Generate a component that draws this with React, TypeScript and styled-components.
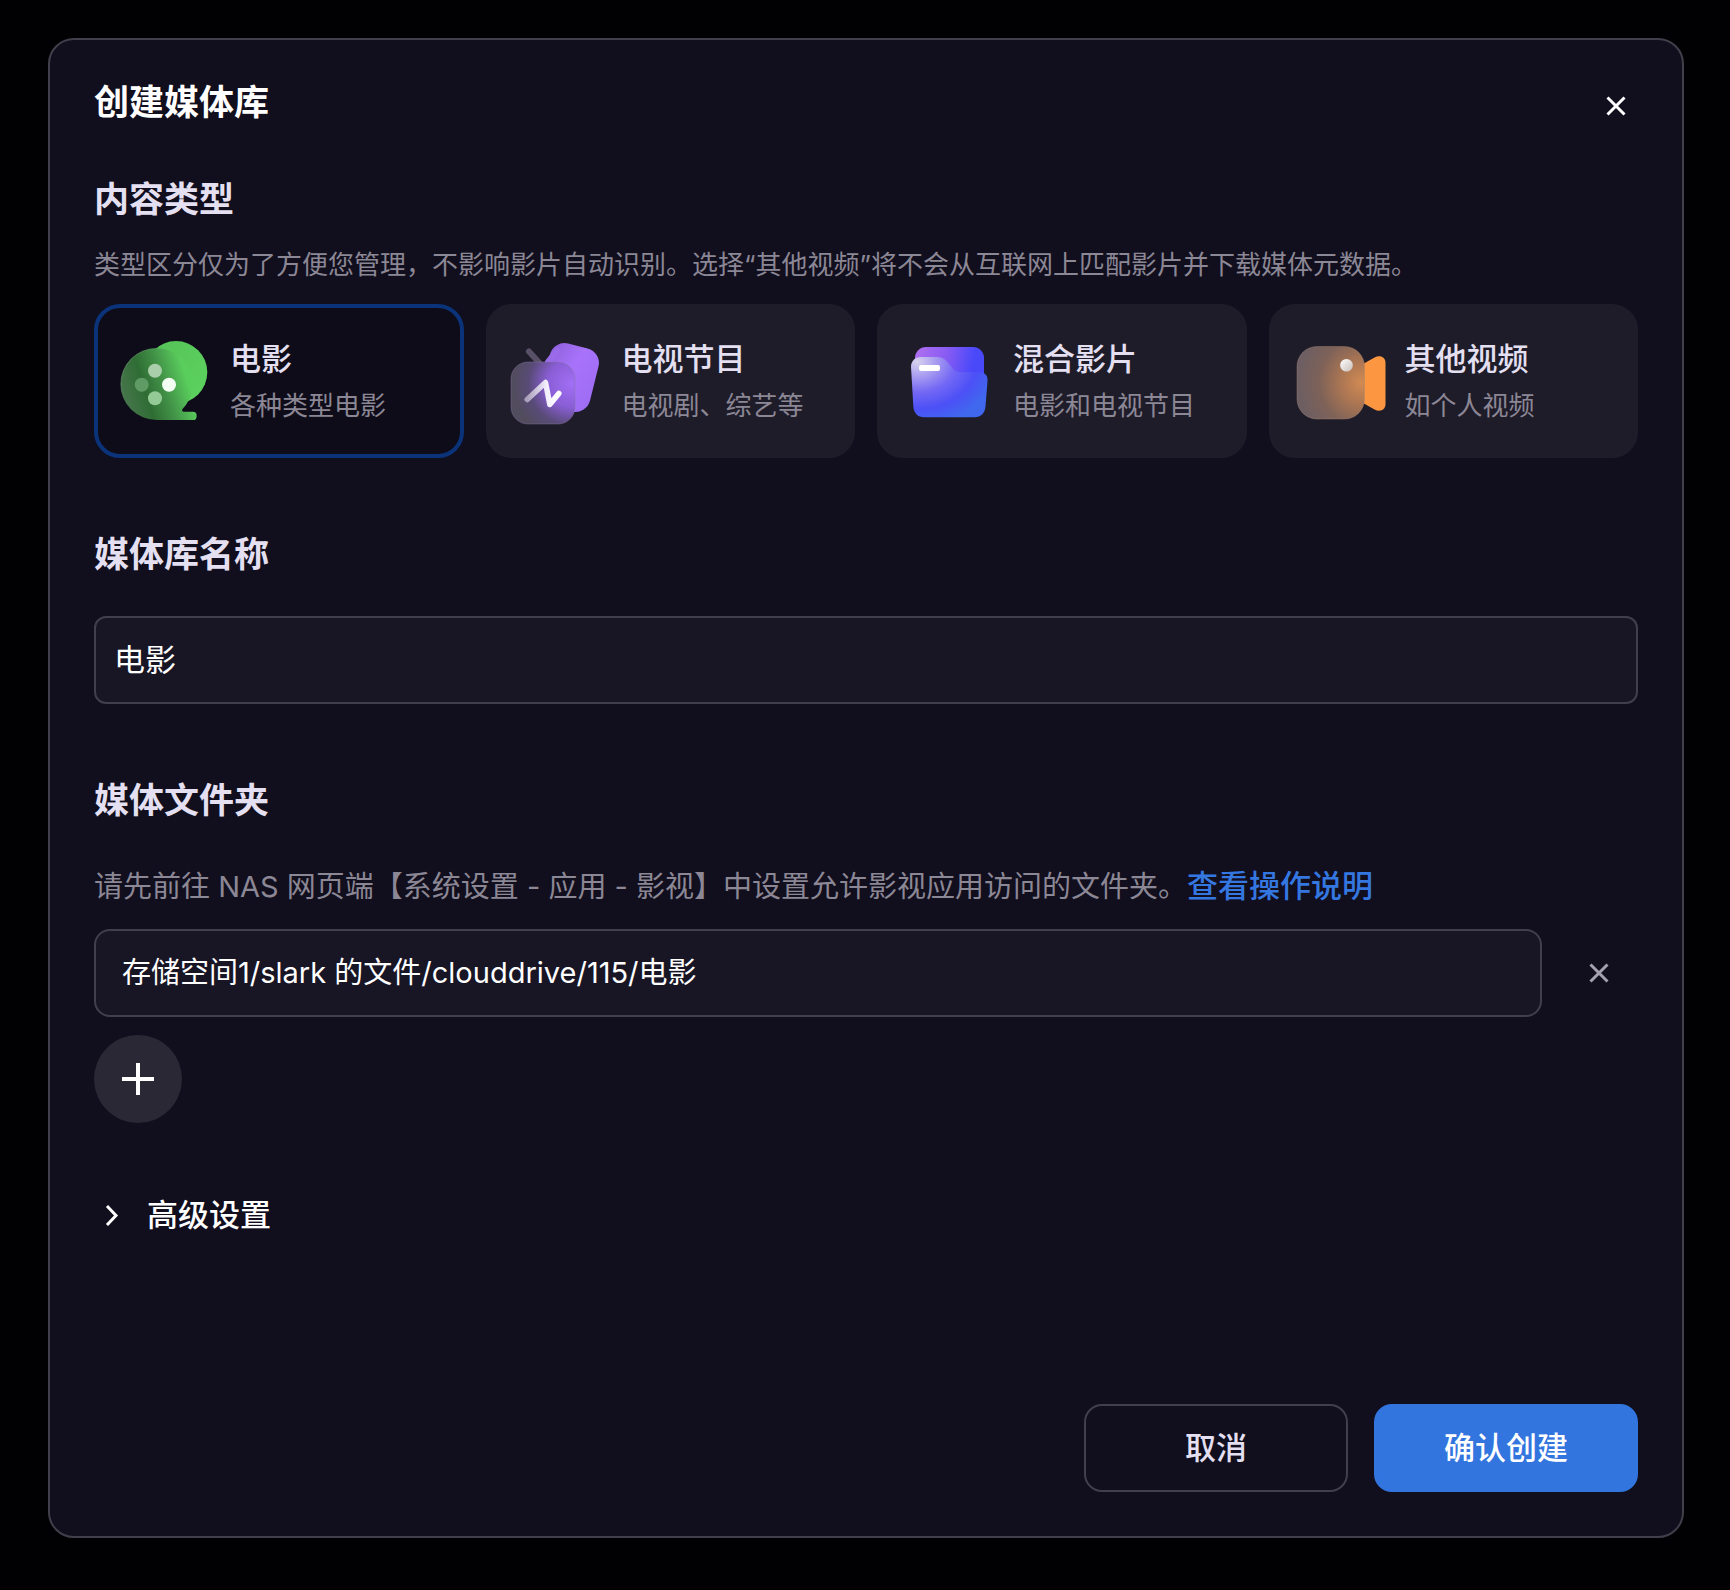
import React, { useState } from "react";
import styled, { createGlobalStyle } from "styled-components";

const fontStack = 'Inter, "Noto Sans CJK SC", "Noto Sans", sans-serif';

const GlobalStyle = createGlobalStyle`
  *, *::before, *::after { box-sizing: border-box; }
  body { margin: 0; background: #010103; color: #fff; font-family: ${fontStack}; }
  button, input { font-family: inherit; }
`;

const Backdrop = styled.main`
  display: flex;
  min-height: 100vh;
  padding: 38px 46px 52px 48px;
  background: #010103;
`;

const Dialog = styled.form`
  display: flex;
  flex: 1;
  flex-direction: column;
  gap: 74px;
  min-width: 0;
  padding: 40px 44px 44px;
  border: 2px solid #413f4b;
  border-radius: 26px;
  background: #110e1d;
`;

const Header = styled.header`
  display: flex;
  align-items: flex-start;
  justify-content: space-between;
  margin-bottom: -29px;
`;

const Title = styled.h1`
  margin: 0;
  font-size: 35px;
  font-weight: 600;
  line-height: 44px;
`;

const IconButton = styled.button<{ $width: number; $height: number; $muted?: boolean }>`
  display: flex;
  flex: none;
  align-items: center;
  justify-content: center;
  width: ${(p) => p.$width}px;
  height: ${(p) => p.$height}px;
  padding: 0;
  border: 0;
  background: none;
  color: ${(p) => (p.$muted ? "#a5a1b1" : "#ffffff")};
  cursor: pointer;
`;

const Section = styled.section`
  display: flex;
  flex-direction: column;
`;

const TypeGroup = styled.fieldset`
  min-width: 0;
  margin: 0;
  padding: 0;
  border: 0;
`;

const headingText = `
  display: block;
  margin: 0;
  padding: 0;
  color: #e4e0f2;
  font-size: 35px;
  font-weight: 600;
  line-height: 44px;
`;

const Legend = styled.legend`${headingText}`;
const FieldLabel = styled.label`${headingText}`;
const Heading = styled.h2`${headingText}`;

const Description = styled.p`
  margin: 24px 0 19px;
  color: #8b8795;
  font-size: 26px;
  line-height: 40px;
`;

const Hint = styled.p`
  margin: 42px 0 20px;
  color: #8b8795;
  font-size: 29px;
  line-height: 44px;
`;

const HelpLink = styled.a`
  color: #3577e0;
  font-size: 31px;
  font-weight: 500;
  text-decoration: none;
`;

const Cards = styled.div`
  display: grid;
  grid-template-columns: repeat(4, minmax(0, 1fr));
  gap: 22px;
`;

const Card = styled.label<{ $selected: boolean }>`
  display: flex;
  align-items: center;
  gap: 22px;
  height: 154px;
  padding: 0 22px;
  border: 4px solid ${(p) => (p.$selected ? "#0a3379" : "#1f1c2a")};
  border-radius: 26px;
  background: ${(p) => (p.$selected ? "#0f0c19" : "#1f1c2a")};
  cursor: pointer;
`;

const HiddenRadio = styled.input`
  position: absolute;
  width: 1px;
  height: 1px;
  margin: 0;
  opacity: 0;
`;

const CardText = styled.span`
  display: flex;
  flex-direction: column;
  white-space: nowrap;
`;

const CardTitle = styled.span`
  color: #e4e0f2;
  font-size: 31px;
  font-weight: 500;
  line-height: 50px;
`;

const CardNote = styled.span`
  color: #8b8795;
  font-size: 26px;
  line-height: 44px;
`;

const Art = styled.svg`
  flex: none;
  width: 88px;
  height: 88px;
  overflow: visible;
`;

const TextInput = styled.input<{ $path?: boolean }>`
  flex: ${(p) => (p.$path ? "1" : "none")};
  min-width: 0;
  height: 88px;
  margin: 0;
  padding: 0 ${(p) => (p.$path ? 26 : 18)}px 6px;
  border: 2px solid #413f4d;
  border-radius: ${(p) => (p.$path ? 16 : 12)}px;
  outline: none;
  background: #181525;
  color: #fff;
  font-size: ${(p) => (p.$path ? 29 : 31)}px;
  line-height: 44px;
`;

const NameField = styled.div`
  display: flex;
  flex-direction: column;
  margin-top: 40px;
`;

const FolderRow = styled.div`
  display: flex;
  align-items: center;
  gap: 18px;
`;

const AddButton = styled.button`
  display: flex;
  align-items: center;
  justify-content: center;
  width: 88px;
  height: 88px;
  margin-top: 18px;
  padding: 0;
  border: 0;
  border-radius: 50%;
  background: #2b2835;
  color: #fff;
  cursor: pointer;
`;

const AdvancedToggle = styled.button`
  display: flex;
  align-items: center;
  align-self: flex-start;
  gap: 18px;
  height: 36px;
  padding: 0;
  border: 0;
  background: none;
  color: #fff;
  font-size: 31px;
  font-weight: 500;
  line-height: 36px;
  cursor: pointer;
`;

const Footer = styled.footer`
  display: flex;
  justify-content: flex-end;
  gap: 26px;
  margin-top: auto;
`;

const ActionButton = styled.button<{ $primary?: boolean }>`
  width: 264px;
  height: 88px;
  padding: 0;
  border: 2px solid ${(p) => (p.$primary ? "#3275df" : "#413f4b")};
  border-radius: 18px;
  background: ${(p) => (p.$primary ? "#3275df" : "transparent")};
  color: ${(p) => (p.$primary ? "#ffffff" : "#e4e0f2")};
  font-size: 31px;
  font-weight: 500;
  line-height: 44px;
  cursor: pointer;
`;

const CrossIcon = () => (
  <svg width="20" height="20" viewBox="0 0 20 20" fill="none" stroke="currentColor" strokeWidth="3" aria-hidden="true">
    <path d="M1.5 1.5l17 17M18.5 1.5l-17 17" />
  </svg>
);

const PlusIcon = () => (
  <svg width="32" height="32" viewBox="0 0 32 32" stroke="currentColor" strokeWidth="4" aria-hidden="true">
    <path d="M16 0v32M0 16h32" />
  </svg>
);

const ChevronIcon = () => (
  <svg width="35" height="36" viewBox="0 0 35 36" fill="none" stroke="currentColor" strokeWidth="3" aria-hidden="true">
    <path d="M13 9l9 9.500-9 9.500" />
  </svg>
);

const MovieArt = () => (
  <Art viewBox="0 0 88 88" aria-hidden="true">
    <defs>
      <linearGradient id="reelBack" x1="0" y1="0" x2="1" y2="1">
        <stop offset="0" stopColor="#55c158" />
        <stop offset="1" stopColor="#5dd45f" />
      </linearGradient>
      <linearGradient id="reelFront" x1="0" y1="0.600" x2="1" y2="0.300">
        <stop offset="0" stopColor="#47754c" />
        <stop offset="0.300" stopColor="#2f6d34" />
        <stop offset="0.550" stopColor="#429348" />
        <stop offset="0.850" stopColor="#5ace5d" />
      </linearGradient>
      <linearGradient id="reelRim" x1="0" y1="0" x2="1" y2="0.600">
        <stop offset="0" stopColor="#7da384" stopOpacity="0.800" />
        <stop offset="0.600" stopColor="#5cb860" stopOpacity="0" />
      </linearGradient>
    </defs>
    <circle cx="56" cy="35.300" r="31.300" fill="url(#reelBack)" />
    <path
      d="M36.700 11.300a35.850 35.850 0 0 1 26 60.500c-1.200 1.500-.5 3 1 3H73a3.600 3.600 0 0 1 3.600 3.600v1a3.600 3.600 0 0 1-3.600 3.600H36.700a35.850 35.850 0 0 1 0-71.700z"
      fill="url(#reelFront)"
      stroke="url(#reelRim)"
    />
    <circle cx="35" cy="33.700" r="7" fill="#a9cfaa" />
    <circle cx="21.700" cy="47.700" r="7" fill="#5f9c65" />
    <circle cx="49" cy="47.700" r="7" fill="#f4fff4" />
    <circle cx="35" cy="61.300" r="7" fill="#93ca96" />
  </Art>
);

const TvArt = () => (
  <Art viewBox="0 0 88 88" aria-hidden="true">
    <defs>
      <linearGradient id="tvBack" x1="0" y1="0" x2="1" y2="0.600">
        <stop offset="0" stopColor="#8c5fd8" />
        <stop offset="0.500" stopColor="#a873fa" />
        <stop offset="1" stopColor="#a06df5" />
      </linearGradient>
      <radialGradient id="tvFront" cx="0.950" cy="0.350" r="0.900">
        <stop offset="0" stopColor="#a26ff5" />
        <stop offset="0.420" stopColor="#8a5ed6" />
        <stop offset="0.750" stopColor="#594b78" />
        <stop offset="1" stopColor="#524c5f" />
      </radialGradient>
      <linearGradient id="tvLine" x1="0" y1="0" x2="1" y2="0">
        <stop offset="0" stopColor="#aaa0bb" />
        <stop offset="0.600" stopColor="#f3edff" />
        <stop offset="1" stopColor="#fff" />
      </linearGradient>
    </defs>
    <rect x="33" y="8" width="50" height="65" rx="15" fill="url(#tvBack)" transform="rotate(14 58 40.500)" />
    <g strokeWidth="6" strokeLinecap="round">
      <path d="M17 14.500l10 11" stroke="#585067" />
      <path d="M45 14l-9 11" stroke="#9a6be8" />
    </g>
    <rect x="-1" y="25" width="64" height="62" rx="17" fill="url(#tvFront)" stroke="#8a7ba8" strokeOpacity="0.400" />
    <path
      d="M15.200 62.500l18.300-17 4.300 22 9-11"
      fill="none"
      stroke="url(#tvLine)"
      strokeWidth="5.500"
      strokeLinecap="round"
      strokeLinejoin="round"
    />
  </Art>
);

const MixedArt = () => (
  <Art viewBox="0 0 88 88" aria-hidden="true">
    <defs>
      <linearGradient id="folderBack" x1="0" y1="0" x2="1" y2="0.200">
        <stop offset="0" stopColor="#b070f0" />
        <stop offset="0.450" stopColor="#8a5cf2" />
        <stop offset="0.850" stopColor="#4a49fa" />
      </linearGradient>
      <radialGradient id="folderFront" cx="0.080" cy="0.080" r="1.050">
        <stop offset="0" stopColor="#d6d2ee" />
        <stop offset="0.220" stopColor="#ab9ff0" />
        <stop offset="0.480" stopColor="#7468f5" />
        <stop offset="0.750" stopColor="#4c50f6" />
        <stop offset="1" stopColor="#4068ee" />
      </radialGradient>
    </defs>
    <rect x="12" y="10" width="69" height="70" rx="11" fill="url(#folderBack)" />
    <path
      d="M8 30c0-6 4-10 10-10h16c4 0 7 1.300 9.500 4l6 7c2.500 3 5 4.200 9 4.200H76c6 0 9 3 8.500 9l-2 25c-.6 7-4.500 11-11 11H21c-6 0-10-4-10.600-10z"
      fill="url(#folderFront)"
    />
    <rect x="16" y="28" width="21" height="6" rx="2" fill="#fff" />
  </Art>
);

const CameraArt = () => (
  <Art viewBox="0 0 88 88" aria-hidden="true">
    <defs>
      <radialGradient id="camBody" cx="0.950" cy="0.500" r="0.950">
        <stop offset="0" stopColor="#d18a53" />
        <stop offset="0.300" stopColor="#ad7753" />
        <stop offset="0.650" stopColor="#7e6258" />
        <stop offset="1" stopColor="#6c5e63" />
      </radialGradient>
      <linearGradient id="camBall" x1="0" y1="0" x2="1" y2="1">
        <stop offset="0" stopColor="#fff" />
        <stop offset="1" stopColor="#c7bdb8" />
      </linearGradient>
    </defs>
    <path d="M68 27l11.500-6.500C85 17.700 90.500 20 90.500 26v41c0 6-5.500 8.300-11 5.500L68 66z" fill="#fd9640" />
    <rect x="2" y="9.500" width="67.500" height="72.500" rx="20" fill="url(#camBody)" stroke="#a58676" strokeOpacity="0.400" />
    <circle cx="51.500" cy="28.300" r="6.300" fill="url(#camBall)" />
  </Art>
);

const contentTypes = [
  { id: "movie", title: "电影", note: "各种类型电影", Picture: MovieArt },
  { id: "tv", title: "电视节目", note: "电视剧、综艺等", Picture: TvArt },
  { id: "mixed", title: "混合影片", note: "电影和电视节目", Picture: MixedArt },
  { id: "other", title: "其他视频", note: "如个人视频", Picture: CameraArt },
];

export default function App() {
  const [type, setType] = useState("movie");
  const [name, setName] = useState("电影");
  const [folder, setFolder] = useState("存储空间1/slark 的文件/clouddrive/115/电影");
  const [advanced, setAdvanced] = useState(false);

  return (
    <>
      <GlobalStyle />
      <Backdrop>
        <Dialog role="dialog" aria-labelledby="dialog-title" onSubmit={(e) => e.preventDefault()}>
          <Header>
            <Title id="dialog-title">创建媒体库</Title>
            <IconButton type="button" $width={44} $height={52} aria-label="关闭">
              <CrossIcon />
            </IconButton>
          </Header>

          <TypeGroup>
            <Legend>内容类型</Legend>
            <Description>
              类型区分仅为了方便您管理，不影响影片自动识别。选择“其他视频”将不会从互联网上匹配影片并下载媒体元数据。
            </Description>
            <Cards>
              {contentTypes.map(({ id, title, note, Picture }) => (
                <Card key={id} $selected={type === id}>
                  <HiddenRadio
                    type="radio"
                    name="content-type"
                    value={id}
                    checked={type === id}
                    onChange={() => setType(id)}
                  />
                  <Picture />
                  <CardText>
                    <CardTitle>{title}</CardTitle>
                    <CardNote>{note}</CardNote>
                  </CardText>
                </Card>
              ))}
            </Cards>
          </TypeGroup>

          <Section>
            <FieldLabel htmlFor="library-name">媒体库名称</FieldLabel>
            <NameField>
              <TextInput id="library-name" type="text" value={name} onChange={(e) => setName(e.target.value)} />
            </NameField>
          </Section>

          <Section>
            <Heading id="folder-heading">媒体文件夹</Heading>
            <Hint>
              请先前往 NAS 网页端【系统设置 - 应用 - 影视】中设置允许影视应用访问的文件夹。
              <HelpLink href="#help">查看操作说明</HelpLink>
            </Hint>
            <FolderRow>
              <TextInput
                $path
                type="text"
                aria-labelledby="folder-heading"
                value={folder}
                onChange={(e) => setFolder(e.target.value)}
              />
              <IconButton type="button" $width={78} $height={88} $muted aria-label="移除文件夹" onClick={() => setFolder("")}>
                <CrossIcon />
              </IconButton>
            </FolderRow>
            <AddButton type="button" aria-label="添加文件夹">
              <PlusIcon />
            </AddButton>
          </Section>

          <AdvancedToggle type="button" aria-expanded={advanced} onClick={() => setAdvanced(!advanced)}>
            <ChevronIcon />
            高级设置
          </AdvancedToggle>

          <Footer>
            <ActionButton type="button">取消</ActionButton>
            <ActionButton type="submit" $primary>
              确认创建
            </ActionButton>
          </Footer>
        </Dialog>
      </Backdrop>
    </>
  );
}
